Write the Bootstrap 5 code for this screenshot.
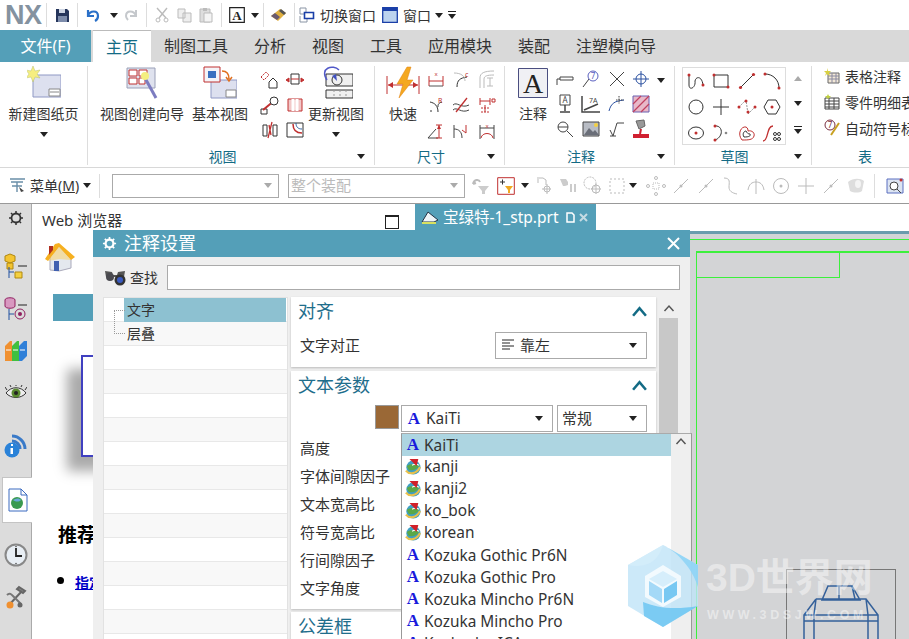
<!DOCTYPE html>
<html lang="zh-CN">
<head>
<meta charset="UTF-8">
<title>NX</title>
<link rel="stylesheet" href="https://cdn.jsdelivr.net/npm/bootstrap@5.3.0/dist/css/bootstrap.min.css">
<style>
body { margin: 0; background: #fff; font-family: "Noto Sans", "Noto Sans CJK SC", sans-serif; color: #333; }
svg { display: block; flex: none; }
.app { width: 909px; height: 639px; overflow: hidden; }
.caret-dn { width: 0; height: 0; border: 4px solid transparent; border-top: 5px solid #222; border-bottom: 0; flex: none; }
.caret-menu { position: relative; margin-top: 3px; }
.caret-menu::before { content: ""; position: absolute; left: -4px; top: -8px; width: 8px; height: 1px; background: #222; }
.caret-flip { transform: scaleY(-1); }
.vsep { width: 1px; height: 24px; background: #ddd; flex: none; }

.qat { height: 30px; padding-left: 5px; font-size: 14px; }
.qat .vsep { margin: 0 4px; }
.nx-logo { font: bold 27px/30px "Liberation Sans", sans-serif; color: #8492a0; letter-spacing: -.5px; width: 37px; }
.q-ic { width: 22px; display: flex; justify-content: center; flex: none; }
.q-sw { width: 16px; }
.ml-2 { margin-left: 2px; } .ml-3 { margin-left: 3px; } .ml-5 { margin-left: 5px; } .ml-6 { margin-left: 6px; }

.tabbar { height: 32px; background: #d9d9d9; font-size: 16px; line-height: 32px; }
.tab-file { width: 91px; background: #549fb8; color: #fff; text-align: center; margin-right: 2px; }
.tab-item { padding: 0 13px; }
.tab-on { background: #fff; color: #136b85; border-top: 1px solid #bbb; width: 58px; text-align: center; padding: 0; }

.ribbon { height: 106px; border-bottom: 1px solid #d8d8d8; font-size: 14px; }
.rb-group { border-right: 1px solid #ddd; height: 99px; margin-top: 4px; display: flex; flex-direction: column; flex: none; }
.rb-body { height: 82px; display: flex; }
.rb-foot { height: 17px; display: flex; align-items: center; padding-right: 9px; }
.rb-foot span { flex-grow: 1; text-align: center; color: #136b85; line-height: 17px; }
.w-g1 { width: 88px; } .w-g2 { width: 287px; } .w-g3 { width: 130px; } .w-g4 { width: 170px; } .w-g5 { width: 137px; } .w-g6 { width: 97px; border-right: 0; }
.big-btn { display: flex; flex-direction: column; align-items: center; flex: none; white-space: nowrap; line-height: 20px; }
.big-btn svg { height: 34px; margin-bottom: 4px; }
.big-btn .caret-dn { margin-top: 8px; }
.btn-wizard { margin-left: 12px; }
.btn-update { width: 56px; }
.btn-quick { width: 36px; margin-left: 10px; }
.btn-note { width: 30px; margin-left: 13px; }
.ic-grid { display: grid; flex: none; justify-items: center; align-items: center; }
.g-view { grid-template-columns: 25px 25px; grid-auto-rows: 25px; margin: 0 1px 0 9px; padding-top: 1px; }
.g-dim { grid-template-columns: 25px 26px 26px; grid-auto-rows: 26px; margin-left: 2px; }
.g-note { grid-template-columns: 26px 26px 25px 24px; grid-auto-rows: 25px; margin-left: 4px; }
.note-caret { margin: 12px 0 0 4px; }
.g-sketch { grid-template-columns: repeat(4, 25.5px); grid-auto-rows: 26px; border: 1px solid #ddd; width: 104px; height: 78px; margin: 1px 0 0 7px; }
.side-col { width: 22px; margin-left: 1px; display: flex; flex-direction: column; align-items: center; justify-content: space-around; height: 78px; }
.tbl-col { flex-direction: column; padding-left: 12px; margin-top: -3px; height: 85px; }
.tbl-line { display: flex; align-items: center; gap: 5px; height: 26px; white-space: nowrap; }
.foot-tbl { padding-left: 9px; padding-right: 0; }

.selbar { height: 35px; font-size: 14px; padding-left: 9px; }
.combo-box { height: 24px; border: 1px solid #aaa; background: #fff; display: flex; align-items: center; justify-content: end; padding-right: 6px; color: #bbb; flex: none; position: relative; }
.combo-box span { position: absolute; left: 2px; font-size: 15px; }
.combo-a { width: 167px; margin-left: 12px; }
.combo-b { width: 177px; margin-left: 9px; }
.caret-gray { border-top-color: #aaa; }
.s-ic { width: 24px; display: flex; justify-content: center; flex: none; }
.s-wide { width: 25px; }
.filter-caret { margin: 0 4px 0 6px; }
.dots-ic { margin-left: 7px; }

.workspace { height: 436px; border-top: 1px solid #999; position: relative; }
.side-nav { width: 32px; background: #dcdcdc; border-right: 1px solid #aaa; flex: none; position: relative; }
.nav-slot { height: 41px; display: flex; align-items: center; justify-content: center; }
.nav-gear { height: 28px; }
.nav-asm { height: 44px; margin-top: 12px; }
.nav-part { height: 42px; }
.nav-gap { height: 42px; }
.nav-info { height: 24px; margin-top: -20px; }
.nav-on { background: #fff; margin: 19px -1px 0 2px; border: 1px solid #c4c4c4; border-right: 0; height: 46px; }
.nav-clock { height: 42px; margin-top: 11px; }
.main-col { width: 877px; }
.doc-tabs { height: 27px; font-size: 15px; }
.tab-web { width: 383px; padding-left: 10px; line-height: 32px; position: relative; }
.max-box { width: 14px; height: 14px; border: 1px solid #222; border-top-width: 2px; position: absolute; left: 353px; top: 11px; }
.tab-prt { width: 181px; background: #549fb8; color: #fff; padding-left: 6px; gap: 4px; font-size: 15.5px; }
.browser-pane { width: 658px; height: 408px; position: relative; }
.gfx-pane { width: 219px; height: 408px; background: #d3d4d6; border-top: 3px solid #6a9cad; position: relative; overflow: hidden; }
.home-ic { position: absolute; left: 12px; top: 11px; }
.web-bar { position: absolute; left: 21px; top: 63px; width: 60px; height: 27px; background: #549fb8; }
.web-card { position: absolute; left: 49px; top: 124px; width: 80px; height: 102px; background: #fff; border: 2px solid #4040c0; box-shadow: -14px 14px 12px #aaa; }
.web-h { position: absolute; left: 26px; top: 289px; font: bold 19px/28px "Noto Sans CJK SC", sans-serif; color: #000; }
.web-li { position: absolute; left: 43px; top: 341px; font: bold 14px/20px "Noto Sans CJK SC", sans-serif; color: #0000c8; text-decoration: underline; }
.web-dot { position: absolute; left: 25px; top: 346px; width: 7px; height: 7px; background: #000; border-radius: 50%; }

.gl-top { position: absolute; left: 0; right: 0; top: 5px; height: 1px; background: #3cf03c; }
.gl-frame { position: absolute; left: 6px; top: 17px; width: 300px; height: 500px; border: 1px solid #3cf03c; border-top-width: 2px; }
.gl-title { position: absolute; left: 6px; top: 17px; width: 144px; height: 27px; border: 1px solid #3cf03c; border-top: 0; border-left: 0; }
.part-box { position: absolute; left: 96px; top: 335px; width: 110px; height: 90px; border: 1px solid #777; }
.part-lines { position: absolute; left: 112px; top: 351px; }

.note-dlg { position: absolute; left: 61px; top: 26px; width: 597px; height: 420px; background: #efefef; }
.dlg-head { height: 27px; background: #549fb8; color: #fff; font-size: 18px; line-height: 27px; padding: 0 10px 0 9px; gap: 7px; }
.find-row { height: 25px; margin: 8px 10px 7px 11px; font-size: 14px; gap: 4px; }
.find-box { height: 25px; border: 1px solid #aaa; background: #fff; flex-grow: 1; margin-left: 5px; }
.dlg-cols { margin-left: 10px; }
.tree-pane { width: 185px; height: 350px; background: #fff; border: 1px solid #e2e2e2; border-bottom: 0; flex: none; margin-right: 3px; position: relative; font-size: 14px; }
.tree-row { height: 24px; border-bottom: 1px solid #e8e8e8; line-height: 23px; padding-left: 23px; }
.tree-row:nth-child(even) { background: #f8f8f8; }
.tree-sel { position: absolute; left: 20px; top: 0; width: 162px; height: 24px; background: #8dc1d1; line-height: 24px; padding-left: 3px; }
.tree-dots { position: absolute; left: 10px; top: 12px; width: 11px; height: 24px; border: 1px dotted #999; border-right: 0; }
.set-col { width: 365px; flex: none; }
.set-sec { background: #fff; box-shadow: 0 1px 2px #bbb; margin-bottom: 4px; padding: 0 9px 0 7px; font-size: 15px; }
.sec-1 { height: 70px; } .sec-2 { height: 238px; margin-bottom: 3px; } .sec-3 { height: 60px; }
.sec-head { height: 30px; color: #1f6e8c; font-size: 18px; line-height: 28px; padding-bottom: 2px; }
.set-row { height: 28px; line-height: 28px; padding-left: 2px; }
.sel-box { height: 27px; border: 1px solid #aaa; background: #fff; flex: none; padding: 0 9px 0 6px; font-size: 15px; }
.sel-align { width: 152px; gap: 6px; margin-left: auto; }
.align-row { height: 28px; margin-top: 4px; padding-left: 2px; }
.font-a { font: bold 17px/22px "Liberation Serif", serif; color: #1a1adc; width: 16px; text-align: center; flex: none; }
.font-row { height: 29px; margin-top: 4px; }
.color-swatch { width: 24px; height: 24px; background: #9a6836; border: 1px solid #999; margin-left: 77px; margin-right: 2px; flex: none; align-self: flex-start; }
.sel-font { width: 152px; gap: 4px; padding-left: 4px; margin-right: 4px; font-size: 15.4px; }
.sel-style { width: 90px; padding-left: 4px; }
.scroll-col { width: 23px; flex: none; height: 350px; padding: 0 1px 0 3px; }
.scroll-top { height: 21px; display: flex; align-items: center; justify-content: center; }
.scroll-thumb { height: 329px; background: #c8c8c8; }

.font-drop { position: absolute; left: 308px; top: 203px; width: 291px; height: 230px; background: #fff; border: 1px solid #999; border-bottom: 0; border-top-color: #aaa; font-size: 15.4px; }
.drop-list { width: 269px; flex: none; }
.drop-item { height: 22px; line-height: 24px; padding-left: 3px; gap: 3px; white-space: nowrap; }
.drop-sel { background: #add5e1; }
.drop-scroll { flex-grow: 1; background: #efefef; height: 230px; padding-top: 3px; }
.wm-logo { position: absolute; left: 627px; top: 341px; }
.wm-title { position: absolute; left: 706px; top: 350px; font: bold 39px/48px "Liberation Sans", "Noto Sans CJK SC", sans-serif; color: rgba(255,255,255,.45); white-space: nowrap; }
.wm-url { position: absolute; left: 707px; top: 403px; font: bold 12.5px/16px "Liberation Sans", sans-serif; color: rgba(255,255,255,.45); letter-spacing: 3.6px; white-space: nowrap; }
</style>
</head>
<body>
<svg class="d-none">
  <symbol id="a-up" viewBox="0 0 14 10"><path d="M1 9 7 2l6 7" fill="none" stroke="#136b85" stroke-width="2.400"/></symbol>
  <symbol id="s-up" viewBox="0 0 12 8"><path d="M1.500 7 6 2l4.500 5" fill="none" stroke="#555" stroke-width="1.500"/></symbol>
  <symbol id="f-globe" viewBox="0 0 18 18"><circle cx="9.500" cy="9.500" r="8" fill="#3f9fc4"/><path d="M2 8c3-3 9-3 14-1-2 5-8 7-12 5z" fill="#5aa848"/><path d="M1 13c4 5 12 4 16-4" fill="none" stroke="#e8c04a" stroke-width="2.400"/><path d="M8 7c3-2 6-1 8 0" fill="none" stroke="#fff" stroke-width="1.200"/><path d="M5 0h10l-2 8z" fill="#d0202a"/></symbol>
  <symbol id="d-line" viewBox="0 0 20 20"><path d="M3 17 17 3" stroke="#333" fill="none"/><circle cx="3.500" cy="16.500" r="1.600" fill="#c03030"/><circle cx="16.500" cy="3.500" r="1.600" fill="#c03030"/></symbol>
  <symbol id="g-line" viewBox="0 0 20 20"><path d="M3 17 17 3" stroke="#bbb" fill="none"/><circle cx="10" cy="10" r="1.500" fill="#bbb"/></symbol>
  <symbol id="g-node" viewBox="0 0 22 22"><path d="M3 3h6l3 2v5M4 4v4M17 14h-9M13 9v10" fill="none" stroke="#bbb"/><circle cx="13" cy="14" r="3" fill="none" stroke="#bbb"/></symbol>
</svg>
<div class="app d-flex flex-column">

  <div class="qat d-flex align-items-center flex-none">
    <div class="nx-logo">NX</div>
    <div class="vsep"></div>
    <div class="q-ic"><svg width="15" height="15" viewBox="0 0 15 15"><path d="M1 1h11l2 2v11H1z" fill="#26365c"/><path d="M4 1h6v4H4z" fill="#cfd6e4"/><path d="M3 8h9v6H3z" fill="#7d8cab"/></svg></div>
    <div class="vsep"></div>
    <div class="q-ic"><svg width="14" height="14" viewBox="0 0 14 14"><path d="M2 2v6h6M2 8c2-6 10-6 10 0 0 2-1 4-3 5" fill="none" stroke="#2a70c8" stroke-width="2.200"/></svg></div>
    <div class="caret-dn ml-6"></div>
    <div class="q-ic ml-2"><svg width="14" height="14" viewBox="0 0 14 14"><path d="M12 2v6H6M12 8C10 2 2 2 2 8c0 2 1 3 2 4" fill="none" stroke="#c5c8cc" stroke-width="2"/></svg></div>
    <div class="vsep"></div>
    <div class="q-ic"><svg width="16" height="16" viewBox="0 0 16 16"><path d="M13 1 5 11M3 1l9 10" stroke="#bbb" stroke-width="1.400" fill="none"/><circle cx="4" cy="13" r="2" fill="none" stroke="#bbb"/><circle cx="12" cy="13" r="2" fill="none" stroke="#bbb"/></svg></div>
    <div class="q-ic"><svg width="15" height="15" viewBox="0 0 15 15"><path d="M1 1h7v9H1zM6 5h8v9H6z" fill="#eee" stroke="#bbb"/></svg></div>
    <div class="q-ic"><svg width="16" height="16" viewBox="0 0 16 16"><path d="M2 2h10v13H2z" fill="#ddd" stroke="#bbb"/><path d="M6 6h8v9H6z" fill="#f4f4f4" stroke="#bbb"/><path d="M5 1h4v3H5z" fill="#bbb"/></svg></div>
    <div class="vsep"></div>
    <div class="q-ic"><svg width="16" height="16" viewBox="0 0 16 16"><path d="M.7.7h14.600v14.600H.7z" fill="#fff" stroke="#222" stroke-width="1.200"/><text x="8" y="13" text-anchor="middle" font-family="Liberation Serif" font-weight="bold" font-size="13" fill="#222">A</text></svg></div>
    <div class="caret-dn ml-3"></div>
    <div class="vsep ml-6"></div>
    <div class="q-ic"><svg width="18" height="14" viewBox="0 0 18 14"><path d="M1 8 10 1l6 4-8 8z" fill="#e0b040"/><path d="M1 8l4-3 5 4-3 3z" fill="#6a5a70"/><path d="M11 1l5 4-2 2-5-4z" fill="#555"/></svg></div>
    <div class="vsep"></div>
    <div class="q-ic q-sw"><svg width="16" height="16" viewBox="0 0 16 16"><path d="M1 1h6v6H1zM9 9h-1v6H1V9" fill="none" stroke="#8a95a5"/><path d="M5.500 5.500h9v6h-9z" fill="#fff" stroke="#1a3fa8" stroke-width="1.600"/></svg></div>
    <span class="ml-5">切换窗口</span>
    <div class="q-ic q-sw ml-6"><svg width="16" height="16" viewBox="0 0 16 16"><path d="M.7.7h14.600v14.600H.7z" fill="#bcd3ee" stroke="#1a3fa8" stroke-width="1.300"/><path d="M1 1h14v3H1z" fill="#1a3fa8"/></svg></div>
    <span class="ml-5">窗口</span>
    <div class="caret-dn ms-1"></div>
    <div class="caret-dn caret-menu ml-5"></div>
  </div>

  <div class="tabbar d-flex flex-none">
    <div class="tab-file">文件(F)</div>
    <div class="tab-item tab-on">主页</div>
    <div class="tab-item">制图工具</div>
    <div class="tab-item">分析</div>
    <div class="tab-item">视图</div>
    <div class="tab-item">工具</div>
    <div class="tab-item">应用模块</div>
    <div class="tab-item">装配</div>
    <div class="tab-item">注塑模向导</div>
  </div>

  <div class="ribbon d-flex flex-none">
    <div class="rb-group w-g1">
      <div class="rb-body justify-content-center">
        <div class="big-btn">
          <svg width="34" height="34" viewBox="0 0 34 34"><path d="M6 9h28v22H6z" fill="#dde0ef" stroke="#8f98c4"/><path d="M22 23h11v7H22z" fill="#fff" stroke="#888"/><path d="M23 26h9" stroke="#888"/><path d="M6 0l2 5 5-1-3 4 3 4-5-1-2 5-2-5-5 1 3-4-3-4 5 1z" fill="#f6ee80" stroke="#b8c070" stroke-width=".5"/></svg>
          <span>新建图纸页</span>
          <div class="caret-dn"></div>
        </div>
      </div>
      <div class="rb-foot"></div>
    </div>

    <div class="rb-group w-g2">
      <div class="rb-body">
        <div class="big-btn btn-wizard">
          <svg width="34" height="34" viewBox="0 0 34 34"><path d="M2 2h28v20H2z" fill="#dfe2ee" stroke="#9aa0b8"/><path d="M4 4h8v6H4zM4 12h8v6H4zM14 4h8v6h-8zM14 12h6v6h-6z" fill="#fff" stroke="#c03030"/><path d="M20 12l11 20" stroke="#7c7cc0" stroke-width="3"/><circle cx="20" cy="10" r="4" fill="#f4ee80"/></svg>
          <span>视图创建向导</span>
        </div>
        <div class="big-btn ms-2">
          <svg width="34" height="34" viewBox="0 0 34 34"><path d="M8 14h26v18H8z" fill="#dde0ef" stroke="#8f98c4"/><path d="M23 24h10v7H23z" fill="#fff" stroke="#888"/><path d="M1 1h16v15H1z" fill="#f4f4f8" stroke="#c03030"/><path d="M5 5h8v7H5z" fill="#3a70c0"/><path d="M19 5c5 0 7 3 7 8M23 11l3 4 3-4" fill="none" stroke="#e07020" stroke-width="1.500"/></svg>
          <span>基本视图</span>
        </div>
        <div class="ic-grid g-view">
          <svg width="20" height="20" viewBox="0 0 20 20"><path d="M1 7l5-5 3 3-5 5z" fill="none" stroke="#c03030" stroke-dasharray="2 1"/><path d="M9 18v-6l4-4 4 4v6z" fill="#fff" stroke="#333"/></svg>
          <svg width="20" height="20" viewBox="0 0 20 20"><path d="M6 4h8v10H6z" fill="none" stroke="#333"/><path d="M6 9h8M1 10l3-2v4zM19 10l-3-2v4z" stroke="#c03030" fill="#c03030"/></svg>
          <svg width="20" height="20" viewBox="0 0 20 20"><path d="M1 14h6v5H1z" fill="none" stroke="#333"/><path d="M3 15 15 5" stroke="#c03030" stroke-width="2"/><circle cx="14" cy="6" r="4" fill="#fff" stroke="#333"/></svg>
          <svg width="20" height="20" viewBox="0 0 20 20"><path d="M3 4h14v12H3z" fill="#f2c8c8" stroke="#c03030"/><path d="M8 4v12M12 4v12" stroke="#fff" stroke-width="3"/></svg>
          <svg width="20" height="20" viewBox="0 0 20 20"><path d="M3 5h4v11H3zM13 5h4v11h-4z" fill="none" stroke="#333"/><path d="M12 2 8 18M9 5l2 10" stroke="#c03030" stroke-width="1.300"/></svg>
          <svg width="20" height="20" viewBox="0 0 20 20"><path d="M2 3h16v14H2z" fill="#fff" stroke="#333"/><path d="M8 4c0 7 4 9 9 9" fill="none" stroke="#c03030" stroke-width="1.500"/><path d="M11 3c0 4 2 6 6 6" fill="none" stroke="#3060a0"/></svg>
        </div>
        <div class="big-btn btn-update">
          <svg width="34" height="34" viewBox="0 0 34 34"><path d="M7 8h27v12H7zM7 24h27v8H7z" fill="#f0f0f0" stroke="#333"/><path d="M15 24v8M21 24v8M27 24v8" stroke="#999" stroke-dasharray="2 2"/><circle cx="18" cy="14" r="5" fill="none" stroke="#333"/><path d="M8 14C0 2 14-2 20 4" fill="none" stroke="#5058c8" stroke-width="1.500"/><path d="M13 10l5 5-1-7z" fill="#4050c0"/></svg>
          <span>更新视图</span>
          <div class="caret-dn"></div>
        </div>
      </div>
      <div class="rb-foot"><span>视图</span><div class="caret-dn"></div></div>
    </div>

    <div class="rb-group w-g3">
      <div class="rb-body">
        <div class="big-btn btn-quick">
          <svg width="34" height="34" viewBox="0 0 34 34"><path d="M1 10v18M33 10v18M2 19h30" stroke="#c03030" fill="none"/><path d="M2 19l5-3v6zM32 19l-5-3v6z" fill="#c03030"/><path d="M21 1 11 18h6l-4 14 14-18h-6l4-13z" fill="#f4a820" stroke="#e08010" stroke-width=".5"/></svg>
          <span>快速</span>
        </div>
        <div class="ic-grid g-dim">
          <svg width="18" height="18" viewBox="0 0 18 18"><path d="M2 6v10M16 6v10M2 11h14" stroke="#c03030" fill="none"/><path d="M2 16h14" stroke="#555"/><text x="9" y="6" text-anchor="middle" font-size="6" fill="#c03030">x</text></svg>
          <svg width="18" height="18" viewBox="0 0 18 18"><path d="M5 17c0-7 3-9 10-10" fill="none" stroke="#333"/><path d="M2 3c7 0 11 3 11 8" fill="none" stroke="#bbb"/><text x="13" y="7" font-size="7" fill="#c03030">c</text></svg>
          <svg width="20" height="20" viewBox="0 0 20 20"><path d="M3 19V9c0-5 4-7 14-7M7 19V10c0-3 3-4 10-4" fill="none" stroke="#bbb"/><path d="M13 9v8M10 9h6M10 17h6" stroke="#bbb"/></svg>
          <svg width="18" height="18" viewBox="0 0 18 18"><path d="M3 6c5 1 8 4 8 10M15 6c-4 1-4 3-4 5" fill="none" stroke="#333"/><text x="11" y="7" font-size="7" fill="#c03030">R</text><path d="M3 15h2" stroke="#333"/></svg>
          <svg width="18" height="18" viewBox="0 0 18 18"><path d="M1 9c4-4 8 4 16 0M1 14c4-4 8 4 16 0" fill="none" stroke="#444"/><path d="M4 16 15 2" stroke="#c03030" stroke-width="1.300"/></svg>
          <svg width="18" height="18" viewBox="0 0 18 18" fill="none" stroke="#c03030"><path d="M2 2v7M2 5h10M12 2v7M7 9v7"/><path d="M3 12h8M3 16h8" stroke-dasharray="2 1"/><path d="M14 3h3v3h-3z"/></svg>
          <svg width="18" height="18" viewBox="0 0 18 18"><path d="M1 16 9 7M1 16h10" fill="none" stroke="#444"/><path d="M12 3v13M9 3h6M9 16h6" stroke="#c03030"/><path d="M12 3l-2 4h4z" fill="#c03030"/></svg>
          <svg width="18" height="18" viewBox="0 0 18 18"><path d="M2 3v13M2 7c5 0 8 3 8 9" fill="none" stroke="#444"/><path d="M14 3v8M10 8l4 3" stroke="#c03030" fill="none"/></svg>
          <svg width="18" height="18" viewBox="0 0 18 18"><path d="M2 3v14M16 3v14M2 6h14" stroke="#444" fill="none"/><path d="M3 16c1-6 11-6 12 0" fill="none" stroke="#c03030"/><text x="9" y="6" text-anchor="middle" font-size="6" fill="#c03030">x</text></svg>
        </div>
      </div>
      <div class="rb-foot"><span>尺寸</span><div class="caret-dn"></div></div>
    </div>

    <div class="rb-group w-g4">
      <div class="rb-body">
        <div class="big-btn btn-note">
          <svg width="30" height="30" viewBox="0 0 30 30"><path d="M.5.5h29v29H.5z" fill="#f0f0f4" stroke="#4a4e80"/><text x="15" y="25" text-anchor="middle" font-family="Liberation Serif" font-size="28" fill="#222">A</text></svg>
          <span>注释</span>
        </div>
        <div class="ic-grid g-note">
          <svg width="18" height="18" viewBox="0 0 18 18"><path d="M1 15V9h16" fill="none" stroke="#444"/><path d="M4 7h13v3H4z" fill="#fff" stroke="#444"/></svg>
          <svg width="18" height="18" viewBox="0 0 18 18"><path d="M1 17 7 9" stroke="#444"/><circle cx="11" cy="6" r="5" fill="#fff" stroke="#5a60c0"/><text x="11" y="9" text-anchor="middle" font-size="8" fill="#5a60c0">7</text></svg>
          <svg width="16" height="16" viewBox="0 0 16 16"><path d="M1 1l14 14M15 1 1 15" stroke="#444"/></svg>
          <svg width="18" height="18" viewBox="0 0 18 18"><circle cx="9" cy="9" r="5" fill="none" stroke="#2a50a0"/><path d="M9 1v16M1 9h16" stroke="#2a50a0"/></svg>
          <svg width="18" height="20" viewBox="0 0 18 20"><path d="M4 1h10v10H4z" fill="#fff" stroke="#444"/><text x="9" y="9" text-anchor="middle" font-size="8" fill="#444">A</text><path d="M9 11v6M4 18h10" stroke="#444" stroke-width="1.500"/></svg>
          <svg width="20" height="18" viewBox="0 0 20 18"><path d="M1 1v16h18" fill="none" stroke="#444" stroke-width="1.500"/><path d="M3 15 17 9" stroke="#444" stroke-width="1.500"/><text x="8" y="8" font-size="7" fill="#444">7A</text></svg>
          <svg width="18" height="18" viewBox="0 0 18 18"><path d="M1 16C3 8 7 6 16 5" fill="none" stroke="#2a50a0"/><path d="M11 1v8M8 5h8" stroke="#444" stroke-dasharray="1.500 1"/></svg>
          <svg width="18" height="18" viewBox="0 0 18 18"><path d="M1 1h16v16H1z" fill="#e8b8c8" stroke="#6a60b0"/><path d="M1 9l8-8M1 17 17 1M9 17l8-8" stroke="#c04060" stroke-width="1.200"/></svg>
          <svg width="18" height="18" viewBox="0 0 18 18"><circle cx="7" cy="7" r="5" fill="none" stroke="#444"/><path d="M2 7h10M11 11l6 6" stroke="#444"/></svg>
          <svg width="18" height="16" viewBox="0 0 18 16"><path d="M1 1h16v14H1z" fill="#b8bcc4" stroke="#444"/><path d="M2 14l5-7 4 4 2-2 4 5z" fill="#6a6e78"/><circle cx="14" cy="4" r="2" fill="#f4d040"/></svg>
          <svg width="16" height="16" viewBox="0 0 16 16"><path d="M1 9l3 6 4-13h7" fill="none" stroke="#444"/><path d="M1 15h6" stroke="#444"/></svg>
          <svg width="18" height="20" viewBox="0 0 18 20"><path d="M1 15h16v4H1z" fill="#d02030"/><path d="M8 15l1-5" stroke="#d02030" stroke-width="2"/><path d="M4 2l8-1 1 6-6 3z" fill="#999" stroke="#666"/></svg>
        </div>
        <div class="caret-dn note-caret"></div>
      </div>
      <div class="rb-foot"><span>注释</span><div class="caret-dn"></div></div>
    </div>

    <div class="rb-group w-g5">
      <div class="rb-body">
        <div class="ic-grid g-sketch">
          <svg width="20" height="20" viewBox="0 0 20 20"><path d="M3 3v11c0 6 7 3 6-4 1-5 7-5 8 4" fill="none" stroke="#333"/><circle cx="3" cy="4" r="1.500" fill="#c03030"/><circle cx="17" cy="14" r="1.500" fill="#c03030"/></svg>
          <svg width="20" height="18" viewBox="0 0 20 18"><path d="M3 3h14v12H3z" fill="none" stroke="#333"/><circle cx="3" cy="3" r="1.500" fill="#c03030"/><circle cx="17" cy="15" r="1.500" fill="#c03030"/></svg>
          <svg width="20" height="20"><use href="#d-line"/></svg>
          <svg width="20" height="20" viewBox="0 0 20 20"><path d="M3 3c8 0 14 6 14 14" fill="none" stroke="#333"/><circle cx="3" cy="3" r="1.500" fill="#c03030"/><circle cx="17" cy="17" r="1.500" fill="#c03030"/></svg>
          <svg width="18" height="18" viewBox="0 0 18 18"><circle cx="9" cy="9" r="7" fill="none" stroke="#333"/></svg>
          <svg width="18" height="18" viewBox="0 0 18 18"><path d="M9 1v16M1 9h16" stroke="#333"/></svg>
          <svg width="20" height="20" viewBox="0 0 20 20"><path d="M2 10 9 3l2 14 7-7" fill="none" stroke="#999" stroke-dasharray="2 1"/><circle cx="2" cy="10" r="1.500" fill="#c03030"/><circle cx="9" cy="4" r="1.500" fill="#c03030"/><circle cx="11" cy="15" r="1.500" fill="#c03030"/><circle cx="18" cy="10" r="1.500" fill="#c03030"/></svg>
          <svg width="18" height="18" viewBox="0 0 18 18"><path d="M5 2h8l4 7-4 7H5L1 9z" fill="none" stroke="#333"/><circle cx="9" cy="9" r="1.500" fill="#c03030"/></svg>
          <svg width="18" height="16" viewBox="0 0 18 16"><ellipse cx="9" cy="8" rx="7.500" ry="6" fill="none" stroke="#333"/><circle cx="9" cy="8" r="1.500" fill="#c03030"/></svg>
          <svg width="16" height="18" viewBox="0 0 16 18"><path d="M1 2c7-1 8 5 7 8-1 3-4 6-7 6" fill="none" stroke="#333"/><circle cx="2" cy="2" r="1.500" fill="#c03030"/><circle cx="2" cy="16" r="1.500" fill="#c03030"/><circle cx="13" cy="9" r="1.300" fill="#888"/></svg>
          <svg width="18" height="18" viewBox="0 0 18 18"><path d="M4 16C-1 10 3 2 8 3c2 1 2 3 2 4 4-1 7 2 6 5-1 4-6 4-12 4z" fill="none" stroke="#c03030"/><path d="M6 13c-2-3 0-6 2-6 1 2 2 3 4 3 1 2-1 3-6 3z" fill="none" stroke="#333"/></svg>
          <svg width="20" height="20" viewBox="0 0 20 20"><path d="M1 18c6 0 3-15 10-15" fill="none" stroke="#c03030" stroke-width="1.300"/><g fill="none" stroke="#333"><circle cx="13" cy="11" r="1.500"/><circle cx="17" cy="11" r="1.500"/><circle cx="13" cy="16" r="1.500"/><circle cx="17" cy="16" r="1.500"/></g></svg>
        </div>
        <div class="side-col">
          <div class="caret-dn caret-gray caret-flip"></div>
          <div class="caret-dn"></div>
          <div class="caret-dn caret-menu"></div>
        </div>
      </div>
      <div class="rb-foot"><span>草图</span><div class="caret-dn"></div></div>
    </div>

    <div class="rb-group w-g6">
      <div class="rb-body tbl-col">
        <div class="tbl-line"><svg width="16" height="16" viewBox="0 0 16 16"><path d="M4 5h11v10H4z" fill="#f2e8d8" stroke="#666"/><path d="M4 8h11M4 11h11M8 5v10M12 5v10" stroke="#8a8aa0"/><path d="M3 0l1 3 3 0-2 2 1 3-3-2-2 2 1-3-2-2h3z" fill="#d8d040"/></svg><span>表格注释</span></div>
        <div class="tbl-line"><svg width="16" height="16" viewBox="0 0 16 16"><path d="M1 4h14v11H1z" fill="#fff" stroke="#444"/><path d="M1 7h14M1 10h14M1 13h14M5 4v11M10 4v11" stroke="#444"/><path d="M4 0l1 2h2l-2 2-1 1-1-1-2-2h2z" fill="#c0d040"/></svg><span>零件明细表</span></div>
        <div class="tbl-line"><svg width="16" height="18" viewBox="0 0 16 18"><circle cx="6" cy="6" r="5" fill="#fff" stroke="#7a3040"/><text x="6" y="9" text-anchor="middle" font-size="8" fill="#7a3040">7</text><path d="M7 16 15 4" stroke="#c8a020" stroke-width="2"/></svg><span>自动符号标注</span></div>
      </div>
      <div class="rb-foot foot-tbl"><span>表</span></div>
    </div>
  </div>

  <div class="selbar d-flex align-items-center flex-none">
    <svg width="17" height="15" viewBox="0 0 17 15"><path d="M1 1h15M2 4h12M8 4v10M3 8h10" stroke="#6a8ea8" stroke-width="1.400" fill="none"/><path d="M10 9l5 4-3 1z" fill="#444"/></svg>
    <span class="ms-1">菜单(<u>M</u>)</span>
    <div class="caret-dn ms-1"></div>
    <div class="vsep ms-2"></div>
    <div class="combo-box combo-a"><div class="caret-dn caret-gray"></div></div>
    <div class="combo-box combo-b"><span>整个装配</span><div class="caret-dn caret-gray"></div></div>
    <div class="s-ic ms-1"><svg width="20" height="18" viewBox="0 0 20 18"><path d="M2 7c1-5 6-5 7-2M2 7l3-1" fill="none" stroke="#bbb" stroke-width="2"/><path d="M7 9h11l-4 5v3h-3v-3z" fill="#ccc"/></svg></div>
    <svg width="18" height="18" viewBox="0 0 18 18" class="ms-1"><path d="M.7.7h16.600v16.600H.7z" fill="#fff" stroke="#c03030"/><path d="M3 5h5M5.500 2.500v5" stroke="#333"/><path d="M8 9h8l-3 4v3h-2v-3z" fill="#f0a820"/></svg>
    <div class="caret-dn filter-caret"></div>
    <div class="s-ic"><svg width="22" height="22"><use href="#g-node"/></svg></div>
    <div class="s-ic"><svg width="20" height="20" viewBox="0 0 20 20"><path d="M1 3h6l2 3v3l-3 1H4zM11 8h2v8h-2zM15 8h2v8h-2z" fill="#ccc"/></svg></div>
    <div class="s-ic"><svg width="20" height="20" viewBox="0 0 20 20"><circle cx="7" cy="7" r="6" fill="none" stroke="#bbb" stroke-dasharray="2 1"/><circle cx="13" cy="13" r="4" fill="none" stroke="#bbb"/><path d="M13 8v10M8 13h10" stroke="#bbb"/></svg></div>
    <div class="s-ic"><svg width="18" height="18" viewBox="0 0 18 18"><path d="M2 2h14v14H2z" fill="none" stroke="#bbb" stroke-dasharray="2 2"/></svg></div>
    <div class="caret-dn"></div>
    <div class="s-ic dots-ic"><svg width="20" height="20" viewBox="0 0 20 20" fill="none" stroke="#bbb"><path d="M7 7h6v6H7z" stroke-dasharray="1 1"/><circle cx="10" cy="2" r="1.500"/><circle cx="2" cy="10" r="1.500"/><circle cx="18" cy="10" r="1.500"/><circle cx="10" cy="18" r="1.500"/></svg></div>
    <div class="s-ic s-wide"><svg width="20" height="20"><use href="#g-line"/></svg></div>
    <div class="s-ic s-wide"><svg width="20" height="20"><use href="#g-line"/></svg></div>
    <div class="s-ic s-wide"><svg width="20" height="20" viewBox="0 0 20 20"><path d="M3 2c7 0 5 5 5 9s3 6 8 7" fill="none" stroke="#bbb"/></svg></div>
    <div class="s-ic s-wide"><svg width="20" height="20" viewBox="0 0 20 20"><path d="M10 3v15M2 14c1-6 4-8 8-8s7 2 8 8" fill="none" stroke="#bbb"/></svg></div>
    <div class="s-ic s-wide"><svg width="18" height="18" viewBox="0 0 18 18"><circle cx="9" cy="9" r="7.500" fill="none" stroke="#bbb"/><circle cx="9" cy="9" r="1.500" fill="#bbb"/></svg></div>
    <div class="s-ic s-wide"><svg width="18" height="18" viewBox="0 0 18 18"><path d="M9 1v16M1 9h16" stroke="#bbb"/></svg></div>
    <div class="s-ic s-wide"><svg width="20" height="20"><use href="#g-line"/></svg></div>
    <div class="s-ic s-wide"><svg width="20" height="18" viewBox="0 0 20 18"><path d="M2 5c5-4 12-4 16-1l-2 10c-3 2-8 2-12 0z" fill="#ddd"/><ellipse cx="12" cy="7" rx="3" ry="4" fill="#f4f4f4"/></svg></div>
    <div class="vsep ml-6"></div>
    <div class="s-ic ms-2"><svg width="18" height="18" viewBox="0 0 18 18"><path d="M1 2h16v14H1z" fill="#dce4f2" stroke="#5a6ec0"/><circle cx="8" cy="9" r="4" fill="#fff" stroke="#444"/><path d="M11 12l4 4" stroke="#444"/><circle cx="15" cy="3" r="1.500" fill="#c03030"/></svg></div>
  </div>

  <div class="workspace d-flex flex-none">
    <div class="side-nav">
      <div class="nav-slot nav-gear"><svg width="16" height="16" viewBox="0 0 16 16"><circle cx="8" cy="8" r="4.500" fill="none" stroke="#333" stroke-width="1.800"/><path d="M8 1v3M8 12v3M1 8h3M12 8h3M3 3l2 2M11 11l2 2M13 3l-2 2M3 13l2-2" stroke="#333" stroke-width="1.500"/></svg></div>
      <div class="nav-slot nav-asm"><svg width="24" height="26" viewBox="0 0 24 26"><path d="M1 3l5-2 5 2v5l-5 2-5-2zM3 10h6v6H3z" fill="#f4c430" stroke="#b08810"/><path d="M5 14v11M5 19h5" stroke="#2050a0" fill="none"/><path d="M11 19h7v6h-7z" fill="#f4d040" stroke="#b08810"/><path d="M14 13h9" stroke="#222"/></svg></div>
      <div class="nav-slot nav-part"><svg width="24" height="24" viewBox="0 0 24 24"><path d="M1 3c0-3 10-3 10 0v6c0 3-10 3-10 0z" fill="#d898c0" stroke="#902060"/><path d="M5 12v11M5 17h5" stroke="#2050a0"/><circle cx="16" cy="17" r="5" fill="none" stroke="#902060"/><circle cx="16" cy="17" r="2" fill="#902060"/><path d="M14 8h9" stroke="#222"/></svg></div>
      <div class="nav-slot"><svg width="24" height="22" viewBox="0 0 24 22"><path d="M1 6l5-5h2v20H1z" fill="#f09030"/><path d="M8 6l5-5h2v20H8z" fill="#40c040"/><path d="M15 6l5-5h3v15l-5 5h-3z" fill="#3080d8"/><path d="M2 10h5M9 10h5M16 10h5" stroke="#fff"/></svg></div>
      <div class="nav-slot"><svg width="22" height="14" viewBox="0 0 22 14"><path d="M1 8c5-7 15-7 20 0-5 6-15 6-20 0z" fill="#eee" stroke="#333"/><circle cx="11" cy="8" r="4.500" fill="#5a8a30"/><circle cx="11" cy="8" r="2" fill="#222"/><path d="M2 5 0 2M6 2 5 0M11 1V0M16 2l1-2M20 5l2-3" stroke="#333"/></svg></div>
      <div class="nav-slot nav-gap"></div>
      <div class="nav-slot nav-info"><svg width="24" height="26" viewBox="0 0 24 26"><path d="M8 3c7 0 13 6 13 13M8 8c5 0 8 4 8 8" fill="none" stroke="#3a7ac8" stroke-width="3"/><circle cx="8" cy="17" r="7.500" fill="#2a82d8"/><path d="M7 11h2v2H7zM6.500 15H9v6H6.500z" fill="#fff"/></svg></div>
      <div class="nav-on nav-slot"><svg width="20" height="24" viewBox="0 0 20 24"><path d="M1 1h12l6 6v16H1z" fill="#fff" stroke="#3a6ac0"/><path d="M13 1v6h6" fill="none" stroke="#3a6ac0"/><circle cx="9" cy="15" r="6" fill="#3a9a50"/><path d="M5 12c3-2 6-2 8 0-2 2-5 2-8 0z" fill="#6aa8d8"/></svg></div>
      <div class="nav-slot nav-clock"><svg width="24" height="24" viewBox="0 0 24 24"><circle cx="12" cy="12" r="10.500" fill="#e8eef4" stroke="#888" stroke-width="2"/><path d="M12 5v8h6" fill="none" stroke="#222" stroke-width="1.800"/><circle cx="12" cy="3.500" r=".7" fill="#333"/><circle cx="12" cy="20.500" r=".7" fill="#333"/></svg></div>
      <div class="nav-slot nav-part"><svg width="22" height="24" viewBox="0 0 22 24"><path d="M4 20 17 6M14 2l6 4-2 2-6-4z" stroke="#666" stroke-width="2" fill="#888"/><path d="M2 10c3-3 5 0 7 2l7 7" stroke="#777" stroke-width="2" fill="none"/><circle cx="5" cy="20" r="3.500" fill="#f09030"/><circle cx="15" cy="20" r="2.500" fill="#666"/></svg></div>
    </div>

    <div class="main-col position-relative">
      <div class="doc-tabs d-flex">
        <div class="tab-web">Web 浏览器<div class="max-box"></div></div>
        <div class="tab-prt d-flex align-items-center">
          <svg width="18" height="14" viewBox="0 0 18 14"><path d="M1 11 7 1l10 8-4 2z" fill="#eef4f8" stroke="#234"/><path d="M1 12h14" stroke="#d8e060" stroke-width="2"/></svg>
          <span>宝绿特-1_stp.prt</span>
          <svg width="9" height="11" viewBox="0 0 9 11" class="ms-1"><path d="M1 1h5l2 2v7H1z" fill="none" stroke="#fff" stroke-width="1.500"/></svg>
          <svg width="9" height="9" viewBox="0 0 9 9"><path d="M1 1l7 7M8 1 1 8" stroke="#c5dbe3" stroke-width="2"/></svg>
        </div>
      </div>
      <div class="d-flex">
        <div class="browser-pane">
          <svg class="home-ic" width="32" height="30" viewBox="0 0 32 30"><path d="M6 14v14l9 1 12-3V13L15 3z" fill="#e4e8ee" stroke="#aab"/><path d="M1 17 11 2l4-1 16 14-4 3L15 5 4 19z" fill="#f6b020"/><path d="M15 5l12 13-12-1-11 2z" fill="#fbd060" fill-opacity=".5"/><path d="M10 19h5v10h-5z" fill="#4060b0"/><path d="M5 4h4v4l-4 5z" fill="#b03020"/></svg>
          <div class="web-bar"></div>
          <div class="web-card"></div>
          <div class="web-h">推荐</div>
          <div class="web-dot"></div>
          <div class="web-li">指定</div>
        </div>
        <div class="gfx-pane">
          <div class="gl-top"></div>
          <div class="gl-frame"></div>
          <div class="gl-title"></div>
          <div class="part-box"></div>
          <svg class="part-lines" width="78" height="54" viewBox="0 0 78 54" fill="none" stroke="#34609a" stroke-width="1.500"><path d="M26 1h24l8 14H20zM37 1v13M50 1l3 13M14 14h50l12 16v24M14 14 2 30v24M2 30h74M2 36h74M14 14l-2 16v24M64 14l2 16v24"/></svg>
        </div>
      </div>

      <div class="note-dlg">
        <div class="dlg-head d-flex align-items-center">
          <svg width="15" height="15" viewBox="0 0 16 16"><circle cx="8" cy="8" r="4.200" fill="none" stroke="#fff" stroke-width="2.400"/><path d="M8 1v3M8 12v3M1 8h3M12 8h3M3 3l2 2M11 11l2 2M13 3l-2 2M3 13l2-2" stroke="#fff" stroke-width="1.800"/></svg>
          <span class="flex-grow-1">注释设置</span>
          <svg width="13" height="13" viewBox="0 0 13 13"><path d="M1 1l11 11M12 1 1 12" stroke="#fff" stroke-width="2"/></svg>
        </div>
        <div class="find-row d-flex align-items-center">
          <svg width="22" height="18" viewBox="0 0 22 18"><path d="M1 2l7 1 1 3 4 0 1-3 7-1-1 6H2z" fill="#555"/><circle cx="6" cy="8" r="4" fill="#4a4a50"/><circle cx="16" cy="11" r="5.500" fill="#333"/><circle cx="16" cy="11" r="3" fill="#3a5ac0"/></svg>
          <span>查找</span>
          <div class="find-box"></div>
        </div>
        <div class="dlg-cols d-flex">
          <div class="tree-pane">
            <div class="tree-row"></div><div class="tree-row">层叠</div><div class="tree-row"></div><div class="tree-row"></div>
            <div class="tree-row"></div><div class="tree-row"></div><div class="tree-row"></div><div class="tree-row"></div>
            <div class="tree-row"></div><div class="tree-row"></div><div class="tree-row"></div><div class="tree-row"></div>
            <div class="tree-row"></div><div class="tree-row"></div><div class="tree-row"></div>
            <div class="tree-sel">文字</div>
            <div class="tree-dots"></div>
          </div>
          <div class="set-col">
            <div class="set-sec sec-1">
              <div class="sec-head d-flex justify-content-between align-items-center"><span>对齐</span><svg width="15" height="11"><use href="#a-up"/></svg></div>
              <div class="d-flex align-items-center align-row"><span>文字对正</span>
                <div class="sel-box sel-align d-flex align-items-center"><svg width="12" height="12" viewBox="0 0 12 12"><path d="M0 1h12M0 4h8M0 7h12M0 10h8" stroke="#222"/></svg><span class="flex-grow-1">靠左</span><div class="caret-dn"></div></div>
              </div>
            </div>
            <div class="set-sec sec-2">
              <div class="sec-head d-flex justify-content-between align-items-center"><span>文本参数</span><svg width="15" height="11"><use href="#a-up"/></svg></div>
              <div class="d-flex font-row">
                <div class="color-swatch"></div>
                <div class="sel-box sel-font d-flex align-items-center"><div class="font-a">A</div><span class="flex-grow-1">KaiTi</span><div class="caret-dn"></div></div>
                <div class="sel-box sel-style d-flex align-items-center"><span class="flex-grow-1">常规</span><div class="caret-dn"></div></div>
              </div>
              <div class="set-row">高度</div>
              <div class="set-row">字体间隙因子</div>
              <div class="set-row">文本宽高比</div>
              <div class="set-row">符号宽高比</div>
              <div class="set-row">行间隙因子</div>
              <div class="set-row">文字角度</div>
            </div>
            <div class="set-sec sec-3"><div class="sec-head"><span>公差框</span></div></div>
          </div>
          <div class="scroll-col">
            <div class="scroll-top"><svg width="12" height="8"><use href="#s-up"/></svg></div>
            <div class="scroll-thumb"></div>
          </div>
        </div>

        <div class="font-drop d-flex">
          <div class="drop-list">
            <div class="drop-item drop-sel d-flex"><div class="font-a">A</div><span>KaiTi</span></div>
            <div class="drop-item d-flex align-items-center"><svg width="16" height="16"><use href="#f-globe"/></svg><span>kanji</span></div>
            <div class="drop-item d-flex align-items-center"><svg width="16" height="16"><use href="#f-globe"/></svg><span>kanji2</span></div>
            <div class="drop-item d-flex align-items-center"><svg width="16" height="16"><use href="#f-globe"/></svg><span>ko_bok</span></div>
            <div class="drop-item d-flex align-items-center"><svg width="16" height="16"><use href="#f-globe"/></svg><span>korean</span></div>
            <div class="drop-item d-flex"><div class="font-a">A</div><span>Kozuka Gothic Pr6N</span></div>
            <div class="drop-item d-flex"><div class="font-a">A</div><span>Kozuka Gothic Pro</span></div>
            <div class="drop-item d-flex"><div class="font-a">A</div><span>Kozuka Mincho Pr6N</span></div>
            <div class="drop-item d-flex"><div class="font-a">A</div><span>Kozuka Mincho Pro</span></div>
            <div class="drop-item d-flex"><div class="font-a">A</div><span>Kyokasho ICA</span></div>
          </div>
          <div class="drop-scroll d-flex justify-content-center"><svg width="12" height="8"><use href="#s-up"/></svg></div>
        </div>
      </div>
    </div>

    <svg class="wm-logo" width="72" height="82" viewBox="0 0 72 82">
      <path d="M36 0 71 20v41L36 82 1 61V20z" fill="#bfe3f8" fill-opacity=".8"/>
      <path d="M1 20 36 0c-4 14-14 24-35 20z" fill="#d6eefb" fill-opacity=".7"/>
      <path d="M16 57c14 6 32 8 55 4L36 82 17 71z" fill="#6cc6f2" fill-opacity=".85"/>
      <path d="M36 0c16 8 30 25 35 42V20z" fill="#8fd4f6" fill-opacity=".9"/>
      <path d="M36 20 54 31v21L36 62 18 52V31z" fill="#fff" fill-opacity=".75"/>
      <path d="M36 26 50 34 36 42 22 34z" fill="#d6eefb"/>
      <path d="M22 36 35 44v14L22 50z" fill="#a4d9f7"/>
      <path d="M50 36 37 44v14l13-8z" fill="#78c8f2"/>
    </svg>
    <div class="wm-title">3D世界网</div>
    <div class="wm-url">WWW.3DSJW.COM</div>
  </div>
</div>
</body>
</html>
